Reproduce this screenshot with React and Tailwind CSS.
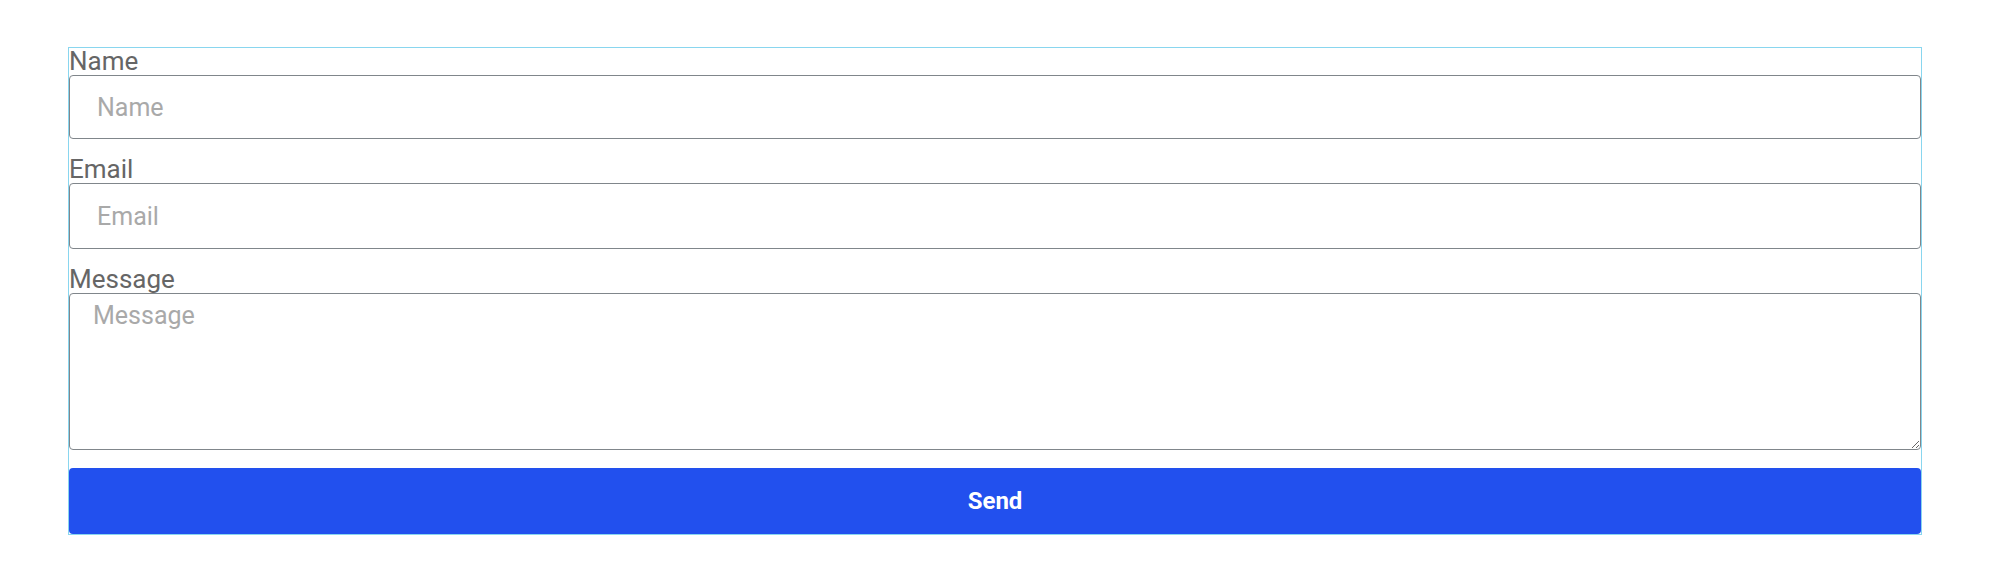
import React, { useState } from 'react';

const fieldClass =
  'w-full border border-[#80868b] rounded-[4px] bg-white text-[25px] text-[#333] placeholder:text-[#a9a9a9] outline-none';

const App = () => {
  const [form, setForm] = useState({ name: '', email: '', message: '' });

  const handleChange = (e) => {
    const { name, value } = e.target;
    setForm(prev => ({ ...prev, [name]: value }));
  };

  const handleSubmit = (e) => {
    e.preventDefault();
  };

  return (
    <div className="min-h-[586px] bg-white pt-[47px] pl-[68px]" style={{ fontFamily: 'Roboto, "Noto Sans", sans-serif' }}>
      <form onSubmit={handleSubmit} className="w-[1854px] border border-[#89d6ef] flex flex-col">
        {/* Name */}
        <label htmlFor="name" className="text-[26px] leading-[27px] text-[#666]">Name</label>
        <input
          id="name"
          name="name"
          value={form.name}
          onChange={handleChange}
          placeholder="Name"
          className={`${fieldClass} h-[64px] px-[27px]`}
        />

        {/* Email */}
        <label htmlFor="email" className="mt-[16px] text-[26px] leading-[28px] text-[#666]">Email</label>
        <input
          id="email"
          name="email"
          type="email"
          value={form.email}
          onChange={handleChange}
          placeholder="Email"
          className={`${fieldClass} h-[66px] px-[27px]`}
        />

        {/* Message */}
        <label htmlFor="message" className="mt-[16px] text-[26px] leading-[28px] text-[#666]">Message</label>
        <textarea
          id="message"
          name="message"
          value={form.message}
          onChange={handleChange}
          placeholder="Message"
          className={`${fieldClass} h-[157px] px-[23px] py-[8px] leading-[28px] resize block`}
        />

        <button
          type="submit"
          className="mt-[18px] h-[66px] w-full rounded-[4px] bg-[#2250ee] text-white text-[24px] font-bold"
        >
          Send
        </button>
      </form>
    </div>
  );
};

export default App;
